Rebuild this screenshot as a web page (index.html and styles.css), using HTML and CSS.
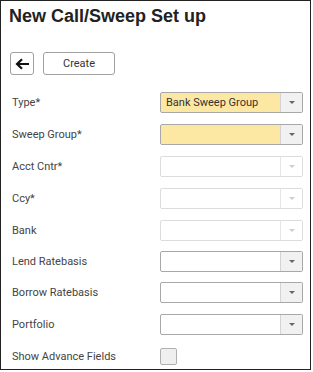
FILE: index.html
```html
<!DOCTYPE html>
<html lang="en">
<head>
    <meta charset="UTF-8">
    <meta name="viewport" content="width=device-width, initial-scale=1.0">
    <title>New Call/Sweep Set up</title>
    <link rel="stylesheet" href="styles.css">
</head>
<body>
    <div class="panel">
        <!-- Title -->
        <h1 class="title">New Call/Sweep Set up</h1>

        <!-- Toolbar -->
        <div class="toolbar">
            <button class="btn btn-back" title="Back">
                <svg width="15" height="12" viewBox="0 0 15 12">
                    <path d="M14 6H2.5M7 1.2L2 6l5 4.8" fill="none" stroke="#111" stroke-width="2.2"/>
                </svg>
            </button>
            <button class="btn btn-create">Create</button>
        </div>

        <!-- Form -->
        <div class="form">
            <div class="row">
                <label>Type*</label>
                <div class="select required">
                    <span class="value">Bank Sweep Group</span>
                    <span class="arrow"></span>
                </div>
            </div>
            <div class="row">
                <label>Sweep Group*</label>
                <div class="select required">
                    <span class="value"></span>
                    <span class="arrow"></span>
                </div>
            </div>
            <div class="row">
                <label>Acct Cntr*</label>
                <div class="select disabled">
                    <span class="value"></span>
                    <span class="arrow"></span>
                </div>
            </div>
            <div class="row">
                <label>Ccy*</label>
                <div class="select disabled">
                    <span class="value"></span>
                    <span class="arrow"></span>
                </div>
            </div>
            <div class="row">
                <label>Bank</label>
                <div class="select disabled">
                    <span class="value"></span>
                    <span class="arrow"></span>
                </div>
            </div>
            <div class="row row-tight">
                <label>Lend Ratebasis</label>
                <div class="select">
                    <span class="value"></span>
                    <span class="arrow"></span>
                </div>
            </div>
            <div class="row row-tight">
                <label>Borrow Ratebasis</label>
                <div class="select">
                    <span class="value"></span>
                    <span class="arrow"></span>
                </div>
            </div>
            <div class="row">
                <label>Portfolio</label>
                <div class="select">
                    <span class="value"></span>
                    <span class="arrow"></span>
                </div>
            </div>
            <div class="row">
                <label>Show Advance Fields</label>
                <span class="checkbox"></span>
            </div>
        </div>
    </div>
</body>
</html>
```

FILE: styles.css
```css
body {
    margin: 0;
    padding: 0;
    background: #fff;
    font-family: Roboto, "Liberation Sans", Arial, sans-serif;
    color: #333;
}

.panel {
    width: 309px;
    height: 368px;
    border: 1px solid #222;
    background: #fff;
}

.title {
    margin: 0;
    padding: 4px 0 0 8px;
    font-family: "Liberation Sans", Arial, sans-serif;
    font-size: 18px;
    line-height: 22px;
    font-weight: bold;
    color: #222;
}

.toolbar {
    display: flex;
    gap: 9px;
    margin-top: 25px;
    padding-left: 9px;
}

.btn {
    height: 23px;
    background: #fff;
    border: 1px solid #a0a0a0;
    border-radius: 3px;
    padding: 0;
    font-family: inherit;
    font-size: 11px;
    color: #333;
}

.btn-back {
    width: 24px;
    display: flex;
    align-items: center;
    justify-content: center;
}

.btn-create {
    width: 72px;
}

.form {
    margin-top: 11px;
    padding-left: 11px;
}

.row {
    display: flex;
    align-items: center;
    height: 32px;
}

.row-tight {
    height: 31px;
}

.row label {
    width: 148px;
    font-size: 11px;
    color: #444;
}

.select {
    display: flex;
    width: 141px;
    height: 19px;
    border: 1px solid #a8a8a8;
    border-radius: 2px;
    background: #fff;
}

.select .value {
    flex: 1;
    padding-left: 5px;
    font-size: 11px;
    line-height: 19px;
    color: #333;
}

.select .arrow {
    width: 21px;
    border-left: 1px solid #d4d4d4;
    background: #f1f1f1;
    position: relative;
}

.select .arrow::after {
    content: "";
    position: absolute;
    left: 8px;
    top: 8px;
    border-left: 3px solid transparent;
    border-right: 3px solid transparent;
    border-top: 3px solid #666;
}

.select.required {
    background: #fde8a3;
}

.select.disabled {
    border-color: #dcdcdc;
}

.select.disabled .arrow {
    background: #fff;
    border-left-color: #e6e6e6;
}

.select.disabled .arrow::after {
    border-top-color: #ccc;
}

.checkbox {
    width: 15px;
    height: 15px;
    border: 1px solid #b0b0b0;
    border-radius: 2px;
    background: #efefef;
}
```
